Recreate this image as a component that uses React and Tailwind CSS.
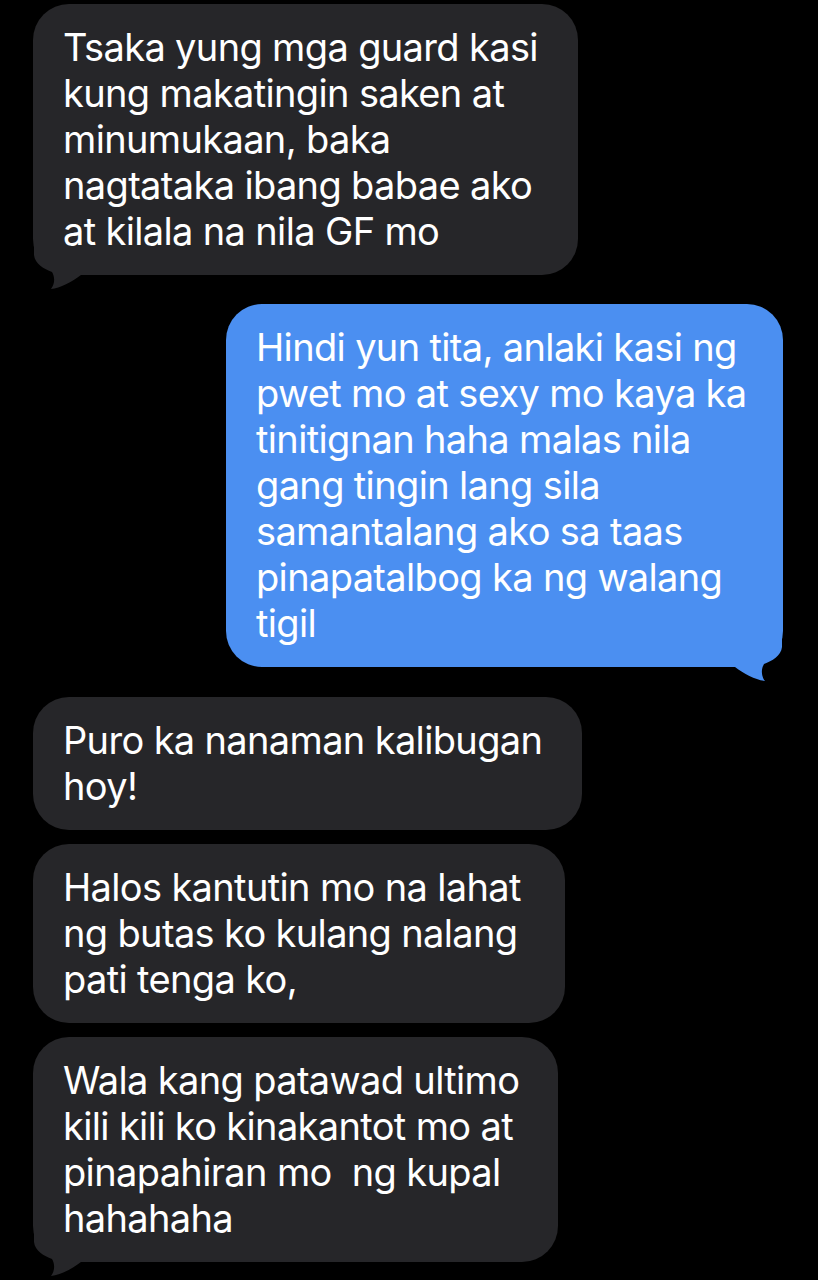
import React from 'react';

const MESSAGES = [
  {
    from: 'them',
    tail: true,
    width: 'w-[545px]',
    lines: [
      'Tsaka yung mga guard kasi',
      'kung makatingin saken at',
      'minumukaan, baka',
      'nagtataka ibang babae ako',
      'at kilala na nila GF mo',
    ],
  },
  {
    from: 'me',
    tail: true,
    width: 'w-[557px]',
    lines: [
      'Hindi yun tita, anlaki kasi ng',
      'pwet mo at sexy mo kaya ka',
      'tinitignan haha malas nila',
      'gang tingin lang sila',
      'samantalang ako sa taas',
      'pinapatalbog ka ng walang',
      'tigil',
    ],
  },
  {
    from: 'them',
    width: 'w-[549px]',
    lines: ['Puro ka nanaman kalibugan', 'hoy!'],
  },
  {
    from: 'them',
    width: 'w-[532px]',
    lines: ['Halos kantutin mo na lahat', 'ng butas ko kulang nalang', 'pati tenga ko,'],
  },
  {
    from: 'them',
    tail: true,
    width: 'w-[525px]',
    lines: [
      'Wala kang patawad ultimo',
      'kili kili ko kinakantot mo at',
      'pinapahiran mo\u00a0 ng kupal',
      'hahahaha',
    ],
  },
];

// tail shape, drawn for the left side; the right one is mirrored
const TAIL = 'M1 0 L1 8 C2 17 11 22 19 25 C22 30 22 37 18 42 C27 41 39 35 48 28 L48 0 Z';

function Tail({ mine }) {
  return (
    <svg
      className={`absolute bottom-[-16px] ${mine ? 'right-0 -scale-x-100' : 'left-0'}`}
      width="60"
      height="44"
      viewBox="0 0 60 44"
    >
      <path d={TAIL} fill={mine ? '#4b8ff1' : '#262629'} />
    </svg>
  );
}

function Bubble({ msg }) {
  const mine = msg.from === 'me';
  return (
    <div className={`flex ${mine ? 'justify-end pr-[35px]' : 'justify-start pl-[33px]'}`}>
      <div
        className={`relative ${msg.width} rounded-[36px] px-[30px] pt-[20px] pb-[21px] ${
          mine ? 'bg-[#4b8ff1]' : 'bg-[#262629]'
        }`}
      >
        {msg.tail && <Tail mine={mine} />}
        <div className="relative text-white text-[38px] leading-[46px] tracking-[-0.65px] whitespace-nowrap">
          {msg.lines.map((l, i) => (
            <div key={i}>{l}</div>
          ))}
        </div>
      </div>
    </div>
  );
}

export default function App() {
  return (
    <div className="w-[818px] h-[1280px] bg-black overflow-hidden pt-[4px] font-['Inter','Roboto',sans-serif]">
      <div className="flex flex-col">
        <Bubble msg={MESSAGES[0]} />
        <div className="h-[29px]" />
        <Bubble msg={MESSAGES[1]} />
        <div className="h-[30px]" />
        <Bubble msg={MESSAGES[2]} />
        <div className="h-[14px]" />
        <Bubble msg={MESSAGES[3]} />
        <div className="h-[14px]" />
        <Bubble msg={MESSAGES[4]} />
      </div>
    </div>
  );
}
